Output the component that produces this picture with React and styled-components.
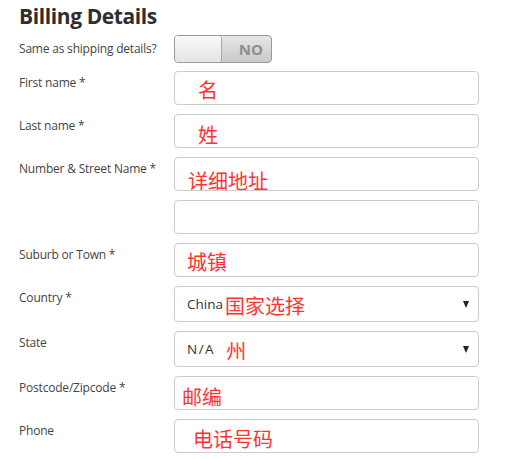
import React from 'react';
import styled, { createGlobalStyle } from 'styled-components';

const GlobalStyle = createGlobalStyle`
  html, body {
    margin: 0;
    padding: 0;
    background: #fff;
  }
  body {
    font-family: 'Open Sans', 'Noto Sans', sans-serif;
  }
`;

const fields = [
  { label: 'First name *', note: '名', inset: 23, dy: 2 },
  { label: 'Last name *', note: '姓', inset: 23, dy: 4 },
  { label: 'Number & Street Name *', note: '详细地址', inset: 13, dy: 7 },
  { label: '', note: '', inset: 0, dy: 0 },
  { label: 'Suburb or Town *', note: '城镇', inset: 12, dy: 2 },
  { label: 'Country *', value: 'China', note: '国家选择', inset: 12, dy: 2, select: true },
  { label: 'State', value: 'N/A', note: '州', inset: 12, dy: 2, select: true, gap: 11 },
  { label: 'Postcode/Zipcode *', note: '邮编', inset: 7, dy: 4 },
  { label: 'Phone', note: '电话号码', inset: 18, dy: 3 },
];

const App = () => {
  return (
    <Page>
      <GlobalStyle />
      <Heading>Billing Details</Heading>
      <Form>
        <Label $center>Same as shipping details?</Label>
        <Toggle>
          <Knob />
          <ToggleText>NO</ToggleText>
        </Toggle>

        {fields.map((f, i) => (
          <React.Fragment key={i}>
            <Label>{f.label}</Label>
            <Field $select={f.select} $inset={f.inset}>
              {f.value && <Value $gap={f.gap}>{f.value}</Value>}
              {f.note && <Note $dy={f.dy}>{f.note}</Note>}
              {f.select && <Arrow />}
            </Field>
          </React.Fragment>
        ))}
      </Form>
    </Page>
  );
};

const Page = styled.div`
  padding: 2px 19px 0;
  width: 507px;
  box-sizing: border-box;
`;

const Heading = styled.h2`
  margin: 0 0 5px;
  font-family: 'Open Sans', sans-serif;
  font-size: 21px;
  font-weight: 700;
  letter-spacing: -0.4px;
  color: #2e2e2e;
  line-height: 28px;
`;

const Form = styled.div`
  display: grid;
  grid-template-columns: 155px 305px;
  row-gap: 9px;
`;

const Label = styled.div`
  font-size: 12px;
  color: #444;
  letter-spacing: -0.2px;
  line-height: 16px;
  padding-top: ${(p) => (p.$center ? '0' : '4px')};
  align-self: ${(p) => (p.$center ? 'center' : 'start')};
`;

const Toggle = styled.div`
  width: 98px;
  height: 28px;
  box-sizing: border-box;
  border: 1px solid #999;
  border-radius: 4px;
  display: flex;
  overflow: hidden;
  background: linear-gradient(#e6e6e6, #c9c9c9);
  margin-bottom: -1px;
`;

const Knob = styled.div`
  width: 46px;
  border-right: 1px solid #aaa;
  border-radius: 0 3px 3px 0;
  background: linear-gradient(#fafafa, #e4e4e4);
`;

const ToggleText = styled.div`
  flex: 1;
  display: flex;
  align-items: center;
  justify-content: flex-end;
  padding-right: 8px;
  font-family: 'Open Sans', sans-serif;
  font-weight: 700;
  font-size: 15px;
  color: #8e8e8e;
`;

const Field = styled.div`
  height: ${(p) => (p.$select ? '36px' : '34px')};
  box-sizing: border-box;
  border: 1px solid #ccc;
  border-radius: 4px;
  display: flex;
  align-items: center;
  padding-left: ${(p) => p.$inset}px;
  padding-right: 9px;
  overflow: hidden;
  background: #fff;
`;

const Value = styled.span`
  font-size: 13.5px;
  color: #333;
  margin-right: ${(p) => p.$gap || 2}px;
  letter-spacing: ${(p) => (p.$gap ? '1.5px' : '0')};
`;

const Note = styled.span`
  font-family: 'Noto Sans CJK SC', sans-serif;
  font-size: 20px;
  line-height: 22px;
  color: #ff3333;
  margin-top: ${(p) => p.$dy * 2}px;
`;

const Arrow = styled.span`
  margin-left: auto;
  width: 0;
  height: 0;
  border-left: 3.5px solid transparent;
  border-right: 3.5px solid transparent;
  border-top: 7px solid #222;
`;

export default App;
